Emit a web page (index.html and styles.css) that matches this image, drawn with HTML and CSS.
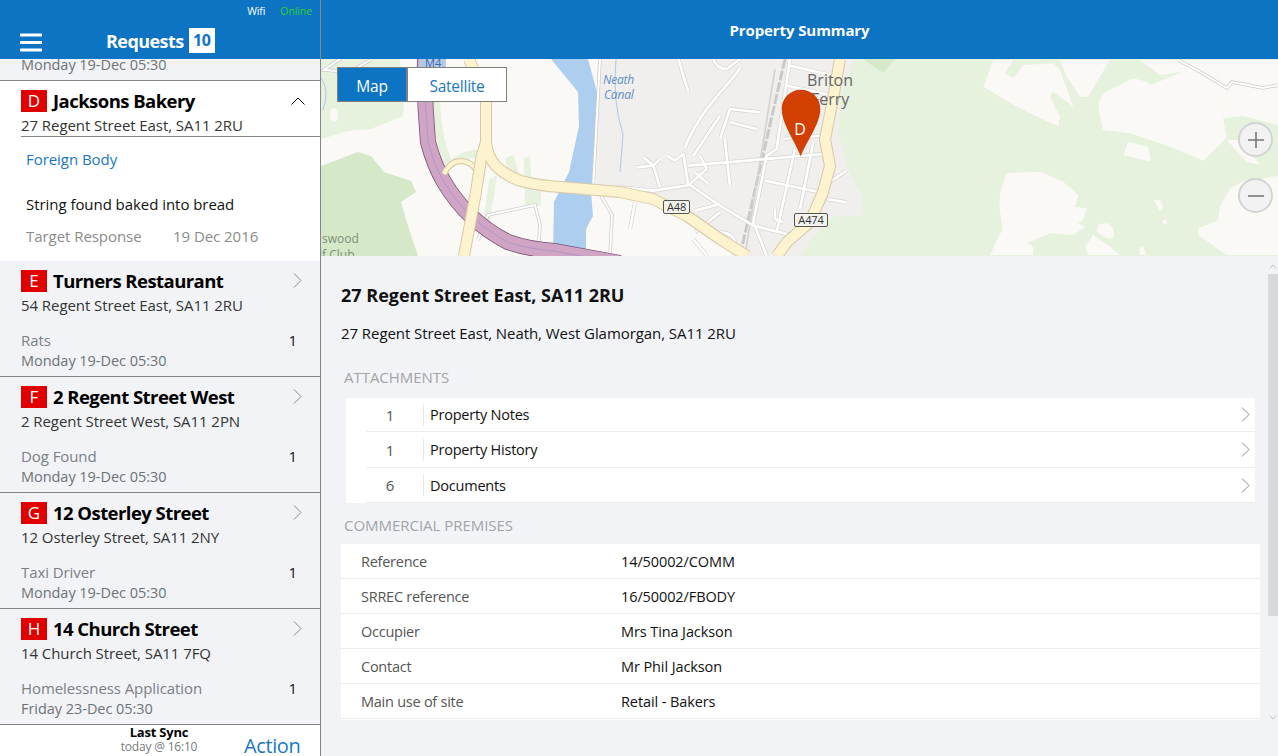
FILE: index.html
```html
<!DOCTYPE html>
<html lang="en">
<head>
<meta charset="utf-8">
<title>Property Summary</title>
<link rel="stylesheet" href="styles.css">
</head>
<body>
<div class="app">
  <aside class="sidebar">
    <header class="side-header">
      <div class="status"><span class="wifi">Wifi</span><span class="online">Online</span></div>
      <div class="side-title">
        <svg class="burger" width="22" height="19" viewBox="0 0 22 19"><path d="M1 2h20M1 9.500h20M1 17h20"/></svg>
        <span class="requests">Requests</span>
        <span class="req-count">10</span>
      </div>
    </header>
    <div class="list">
      <div class="stub"><span>Monday 19-Dec 05:30</span></div>
      <article class="item open">
        <div class="item-head"><span class="badge">D</span><span class="item-name">Jacksons Bakery</span>
          <svg class="chev-up" width="14" height="8" viewBox="0 0 14 8"><path d="M0.500 7.500L7 1l6.500 6.500"/></svg></div>
        <div class="item-addr">27 Regent Street East, SA11 2RU</div>
        <div class="item-more">
          <div class="kind">Foreign Body</div>
          <div class="note">String found baked into bread</div>
          <div class="target"><span class="target-label">Target Response</span><span>19 Dec 2016</span></div>
        </div>
      </article>
      <article class="item">
        <div class="item-head"><span class="badge">E</span><span class="item-name">Turners Restaurant</span>
          <svg class="chev" width="9" height="15" viewBox="0 0 9 15"><path d="M1 0.500l7 7-7 7"/></svg></div>
        <div class="item-addr">54 Regent Street East, SA11 2RU</div>
        <div class="item-type"><span>Rats</span><span class="num">1</span></div>
        <div class="item-date">Monday 19-Dec 05:30</div>
      </article>
      <article class="item">
        <div class="item-head"><span class="badge">F</span><span class="item-name">2 Regent Street West</span>
          <svg class="chev" width="9" height="15" viewBox="0 0 9 15"><path d="M1 0.500l7 7-7 7"/></svg></div>
        <div class="item-addr">2 Regent Street West, SA11 2PN</div>
        <div class="item-type"><span>Dog Found</span><span class="num">1</span></div>
        <div class="item-date">Monday 19-Dec 05:30</div>
      </article>
      <article class="item">
        <div class="item-head"><span class="badge">G</span><span class="item-name">12 Osterley Street</span>
          <svg class="chev" width="9" height="15" viewBox="0 0 9 15"><path d="M1 0.500l7 7-7 7"/></svg></div>
        <div class="item-addr">12 Osterley Street, SA11 2NY</div>
        <div class="item-type"><span>Taxi Driver</span><span class="num">1</span></div>
        <div class="item-date">Monday 19-Dec 05:30</div>
      </article>
      <article class="item">
        <div class="item-head"><span class="badge">H</span><span class="item-name">14 Church Street</span>
          <svg class="chev" width="9" height="15" viewBox="0 0 9 15"><path d="M1 0.500l7 7-7 7"/></svg></div>
        <div class="item-addr">14 Church Street, SA11 7FQ</div>
        <div class="item-type"><span>Homelessness Application</span><span class="num">1</span></div>
        <div class="item-date">Friday 23-Dec 05:30</div>
      </article>
    </div>
    <footer class="side-footer">
      <div class="sync"><div class="sync-title">Last Sync</div><div class="sync-time">today @ 16:10</div></div>
      <div class="action">Action</div>
    </footer>
  </aside>

  <main class="main">
    <header class="main-header">Property Summary</header>
    <section class="map">
      <svg class="map-art" width="957" height="197" viewBox="321 59 957 197">
        <rect class="m-base" x="321" y="59" width="957" height="197"/>
        <polygon class="m-pale" points="321,59 400,59 404,102 403,116 371,129 348,131 321,139"/>
        <ellipse class="m-base" cx="334" cy="115" rx="4" ry="7"/>
        <polygon class="m-dark" points="321,166 358,152 371,156 384,172 411,181 416,192 401,202 408,226 418,256 321,256"/>
        <path class="m-pale-line" d="M436 100Q438 145 450 165Q470 150 482 155"/>
        <polygon class="m-pale" points="505,158 514,155 519,176 508,176"/>
        <polygon class="m-pale" points="524,158 530,156 532,190 541,192 541,206 525,206"/>
        <polygon class="m-pale" points="489,180 497,175 490,220 484,220"/>
        <polygon class="m-urban" points="598,59 853,59 840,100 838,136 848,170 860,192 863,216 833,216 810,240 800,256 737,256 687,219 653,199 596,190"/>
        <polygon class="m-water" points="551,59 588,59 598,96 596,136 591,192 593,216 586,229 586,256 553,256 554,202 569,172 579,126 578,92"/>
        <path class="m-stream" d="M616 59Q612 100 623 135L620 172M321 78Q330 90 323 110"/>
        <!-- green hills to the east, with clearings -->
        <polygon class="m-pale" points="853,59 1278,59 1278,256 800,256 810,240 833,216 863,216 860,192 848,170 838,136 840,100"/>
        <polygon class="m-dark" points="863,59 895,59 883,73"/>
        <g transform="translate(850 50) scale(.3333)">
          <polygon class="m-base" points="430,30 400,110 500,170 570,205 625,228 630,200 600,140 610,125 670,170 630,60 610,40 520,45 490,85 465,70 490,30"/>
          <polygon class="m-base" points="630,30 650,80 690,140 715,140 780,30"/>
          <polygon class="m-base" points="870,30 930,75 1000,65 1100,70 1130,130 1120,205 1180,198 1284,225 1284,30"/>
          <polygon class="m-base" points="745,160 760,130 850,85 890,95 900,105 1000,65 1100,70 1130,130 1120,205 1130,265 1060,332 960,290 840,250 760,240 750,200"/>
          <polygon class="m-base" points="1130,270 1190,335 1230,345 1170,270"/>
          <polygon class="m-base" points="470,370 570,365 640,395 685,435 675,470 710,475 700,510 685,520 705,530 670,555 600,550 530,580 550,590 550,615 420,615 445,560 458,540 448,470 450,430"/>
          <polygon class="m-base" points="745,522 775,520 790,535 790,565 770,565 740,545"/>
          <polygon class="m-base" points="730,555 780,590 810,615 715,615 705,590"/>
          <polygon class="m-base" points="835,275 895,290 902,335 820,315"/>
          <polygon class="m-base" points="1284,378 1180,395 1140,415 1110,470 1105,510 1045,535 1045,555 1130,615 1284,615"/>
          <polygon class="m-base" points="868,590 880,590 888,615 870,615"/>
          <polygon class="m-base" points="912,450 930,450 940,470 930,485"/>
          <polygon class="m-base" points="940,510 952,510 950,522 936,520"/>
        </g>
        <path class="m-casing-thin" d="M1178 60L1197 70L1227 88L1232 82L1263 88L1278 85"/>
        <path class="m-white-thin" d="M1178 60L1197 70L1227 88L1232 82L1263 88L1278 85"/>
        <!-- white local roads west of the town -->
        <path class="m-casing-thin" d="M600 59Q596 130 593 190M599 192L612 215L610 256M478 240L488 215L535 205L540 225L538 256M340 59L324 70L350 72L370 60"/>
        <path class="m-white-thin" d="M600 59Q596 130 593 190M599 192L612 215L610 256M478 240L488 215L535 205L540 225L538 256M340 59L324 70L350 72L370 60"/>
        <!-- town streets, traced in 3x coordinates -->
        <g transform="translate(620 59) scale(.3333)">
          <path class="m-rail" d="M495 0L360 590"/>
          <path class="m-rail2" d="M465 30L375 590"/>
          <g class="m-casing">
            <path id="town" d="M175 0L205 100M360 25C350 60 250 130 195 265M300 170L220 290M330 150L420 160M330 150L300 240M330 190L410 210M315 240Q320 300 330 380M50 325L100 320L120 385M70 295L100 320L120 300M140 290L165 305L190 285L205 380M205 320L610 285M240 290L260 330L210 375M225 340L265 375M0 385L100 395L210 378L300 440L400 500L520 530M45 430L30 510M435 365L600 400M525 270L470 520M580 250L540 450M470 270L440 290L400 490L440 590M510 20L640 50M500 80L640 110M490 240L605 230M605 230L610 290M510 0L470 270M620 375L680 335M620 420L680 430M465 450L465 480L490 490M225 455L300 435M225 520L300 460M300 520Q360 520 340 590M260 590L220 540M280 0Q290 30 320 30L360 0"/>
          </g>
          <use href="#town" class="m-street"/>
        </g>
        <path class="m-road-edge" d="M425 59Q424 100 428 142Q434 165 444 182Q456 202 471 216Q488 232 508 242Q528 249 554 251L620 263"/>
        <path class="m-motor" d="M425 59Q424 100 428 142Q434 165 444 182Q456 202 471 216Q488 232 508 242Q528 249 554 251L620 263"/>
        <path class="m-motor-line" d="M425 59Q424 100 428 142Q434 165 444 182Q456 202 471 216Q488 232 508 242Q528 249 554 251L620 263"/>
        <path class="m-a-edge-thin" d="M444 174Q450 161 461 161Q475 162 478 176"/>
        <path class="m-a-thin" d="M444 174Q450 161 461 161Q475 162 478 176"/>
        <path class="m-a-edge" d="M469 59L486 99V142L481 159L476 192L464 256M486 142Q488 158 496 166Q506 176 521 181Q540 186 561 187L620 192L653 199L687 216L720 239L747 256"/>
        <path class="m-a" d="M469 59L486 99V142L481 159L476 192L464 256M486 142Q488 158 496 166Q506 176 521 181Q540 186 561 187L620 192L653 199L687 216L720 239L747 256"/>
        <path class="m-a-edge" d="M840 59L833 99L825 139L830 166L823 192L810 222L787 242L777 256"/>
        <path class="m-a" d="M840 59L833 99L825 139L830 166L823 192L810 222L787 242L777 256"/>
        <rect class="m-m4" x="419" y="59" width="27" height="8"/>
        <text class="m-m4-text" x="425" y="67">M4</text>
        <rect class="m-shield" x="663.500" y="200.500" width="26" height="13" rx="1.500"/>
        <text class="m-shield-text" x="676.500" y="211">A48</text>
        <rect class="m-shield" x="794.500" y="213.500" width="33" height="13" rx="1.500"/>
        <text class="m-shield-text" x="811" y="224">A474</text>
        <text class="m-town" x="807" y="86">Briton</text>
        <text class="m-town" x="811" y="105">Ferry</text>
        <text class="m-canal" x="603" y="84">Neath</text>
        <text class="m-canal" x="604" y="99">Canal</text>
        <text class="m-golf" x="322" y="243">swood</text>
        <text class="m-golf" x="319" y="259">lf Club</text>
        <g transform="translate(620 59) scale(.3333)">
          <path class="m-pin" d="M542 292C525 245 485 195 485 150A58 58 0 0 1 601 150C601 195 560 245 542 292Z"/>
        </g>
        <text class="m-pin-text" x="800" y="135">D</text>
      </svg>
      <div class="map-toggle"><span class="tg tg-on">Map</span><span class="tg">Satellite</span></div>
      <button class="zoom-btn zoom-in" aria-label="Zoom in"><svg width="16" height="16" viewBox="0 0 16 16"><path d="M0 8h16M8 0v16"/></svg></button>
      <button class="zoom-btn zoom-out" aria-label="Zoom out"><svg width="16" height="16" viewBox="0 0 16 16"><path d="M0 8h16"/></svg></button>
    </section>
    <section class="detail">
      <h1 class="d-title">27 Regent Street East, SA11 2RU</h1>
      <p class="d-addr">27 Regent Street East, Neath, West Glamorgan, SA11 2RU</p>
      <h2 class="d-head">ATTACHMENTS</h2>
      <div class="att-card">
        <div class="att-row"><span class="att-n">1</span><span class="att-name">Property Notes</span><svg class="att-chev" width="9" height="15" viewBox="0 0 9 15"><path d="M1 0.500l7 7-7 7"/></svg></div>
        <div class="att-row"><span class="att-n">1</span><span class="att-name">Property History</span><svg class="att-chev" width="9" height="15" viewBox="0 0 9 15"><path d="M1 0.500l7 7-7 7"/></svg></div>
        <div class="att-row"><span class="att-n">6</span><span class="att-name">Documents</span><svg class="att-chev" width="9" height="15" viewBox="0 0 9 15"><path d="M1 0.500l7 7-7 7"/></svg></div>
      </div>
      <h2 class="d-head d-head-2">COMMERCIAL PREMISES</h2>
      <div class="info-card">
        <div class="info-row"><span class="info-label">Reference</span><span>14/50002/COMM</span></div>
        <div class="info-row"><span class="info-label">SRREC reference</span><span>16/50002/FBODY</span></div>
        <div class="info-row"><span class="info-label">Occupier</span><span>Mrs Tina Jackson</span></div>
        <div class="info-row"><span class="info-label">Contact</span><span>Mr Phil Jackson</span></div>
        <div class="info-row"><span class="info-label">Main use of site</span><span>Retail - Bakers</span></div>
      </div>
      <div class="scrollbar">
        <svg class="sb-arrow" width="8" height="5" viewBox="0 0 8 5"><path d="M0.500 4.500L4 1l3.500 3.500"/></svg>
        <div class="sb-thumb"></div>
        <svg class="sb-arrow sb-down" width="8" height="5" viewBox="0 0 8 5"><path d="M0.500 0.500L4 4l3.500-3.500"/></svg>
      </div>
    </section>
  </main>
</div>
</body>
</html>
```
FILE: styles.css
```css
* { box-sizing: border-box; }
html, body { margin: 0; height: 100%; overflow: hidden; }
body { font-family: "Open Sans", "Noto Sans", sans-serif; color: #111; background: #f2f3f7; }
.app { display: flex; width: 1278px; height: 756px; overflow: hidden; }

/* sidebar */
.sidebar { width: 321px; flex: none; display: flex; flex-direction: column; border-right: 1px solid #868686; }
.side-header { height: 59px; background: #0c74c2; color: #fff; position: relative; flex: none; }
.status { display: flex; justify-content: flex-end; gap: 15px; padding: 4px 8px 0 0; font-size: 10.500px; line-height: 14px; letter-spacing: -.1px; }
.online { color: #2fd12f; }
.side-title { display: flex; align-items: center; height: 26px; margin-top: 9px; padding-left: 20px; }
.burger { stroke: #fff; stroke-width: 3; fill: none; stroke-linecap: round; flex: none; margin-top: 5px; }
.requests { font-size: 18px; font-weight: 700; margin-left: 64px; letter-spacing: -.55px; margin-top: 2px; }
.req-count { width: 26px; height: 25px; margin-left: 5px; background: #fff; color: #0c74c2; font-size: 16px; font-weight: 700; text-align: center; line-height: 25px; letter-spacing: -.5px; }

.list { flex: none; height: 666px; overflow: hidden; }
.stub { height: 22px; border-bottom: 1px solid #868686; padding: 0 0 5px 21px; display: flex; align-items: flex-end; overflow: hidden; font-size: 14.500px; line-height: 20px; color: #6d7278; letter-spacing: -.04px; }
.item { height: 116px; padding: 9px 0 0 21px; border-bottom: 1px solid #868686; background: #f2f3f7; }
.item.open { height: 180px; background: #fff; border-bottom: 0; }
.item-head { display: flex; align-items: center; height: 22px; position: relative; }
.badge { width: 26px; height: 22px; background: #e00000; color: #fff; font-size: 17px; line-height: 22px; text-align: center; flex: none; }
.item-name { font-size: 18.500px; font-weight: 700; color: #000; margin: -2px 0 0 6px; letter-spacing: -.55px; white-space: nowrap; }
.chev { position: absolute; left: 272px; top: 3px; stroke: #8a8a8a; fill: none; }
.chev-up { position: absolute; left: 270px; top: 7px; stroke: #111; fill: none; }
.item-addr { font-size: 15px; line-height: 24px; margin-top: 1px; color: #333; letter-spacing: -.07px; white-space: nowrap; }
.item-type { display: flex; justify-content: space-between; font-size: 15px; line-height: 20px; margin-top: 13px; padding-right: 23px; color: #7b8085; letter-spacing: -.08px; }
.num { color: #111; }
.item-date { font-size: 14.500px; line-height: 20px; margin-top: 1px; color: #6d7278; letter-spacing: -.04px; }
.item-more { border-top: 1px solid #868686; margin-top: -1px; padding: 12px 0 0 5px; font-size: 15px; line-height: 20px; letter-spacing: -.05px; }
.kind { color: #1878c4; }
.note { margin-top: 25px; color: #111; }
.target { margin-top: 12px; color: #8b8b8b; display: flex; }
.target-label { width: 147px; }

.side-footer { height: 31px; flex: none; background: #fff; display: flex; overflow: hidden; }
.sync { margin-left: 99px; width: 120px; text-align: center; }
.sync-title { font-size: 13px; font-weight: 700; line-height: 15px; color: #000; letter-spacing: -.2px; }
.sync-time { font-size: 12px; line-height: 14px; color: #7a7a7a; letter-spacing: -.2px; }
.action { margin-left: 25px; font-size: 20px; line-height: 42px; color: #1878c4; letter-spacing: -.4px; height: 31px; }

/* main */
.main { flex: 1; display: flex; flex-direction: column; min-width: 0; }
.main-header { height: 59px; flex: none; background: #0c74c2; color: #fff; font-size: 15px; font-weight: 700; text-align: center; line-height: 60px; letter-spacing: -.1px; }
.map { height: 197px; flex: none; position: relative; overflow: hidden; }
.map-art { display: block; }
.m-base { fill: #faf9f6; }
.m-pale { fill: #e6f1de; }
.m-dark { fill: #d5e8c8; }
.m-urban { fill: #f0efed; }
.m-water { fill: #aeceef; }
.m-pale-line { fill: none; stroke: #e6f1de; stroke-width: 8; }
.m-stream { fill: none; stroke: #a9c9ee; stroke-width: 1; }
.m-casing-thin { fill: none; stroke: #cfccc8; stroke-width: 3.500; }
.m-white-thin { fill: none; stroke: #fff; stroke-width: 2; }
.m-casing { fill: none; stroke: #d5d2ce; stroke-width: 12; stroke-linejoin: round; }
.m-street { fill: none; stroke: #fff; stroke-width: 8; stroke-linejoin: round; }
.m-rail { fill: none; stroke: #c9c9c9; stroke-width: 9; stroke-dasharray: 30 6; }
.m-rail2 { fill: none; stroke: #d2d2d2; stroke-width: 5; }
.m-road-edge { fill: none; stroke: #7a4a6a; stroke-width: 16; }
.m-motor { fill: none; stroke: #cfa4c5; stroke-width: 14.500; }
.m-motor-line { fill: none; stroke: #b199c6; stroke-width: 1; }
.m-a-edge { fill: none; stroke: #d8c8a6; stroke-width: 12; stroke-linejoin: round; }
.m-a { fill: none; stroke: #fdf3cf; stroke-width: 10; stroke-linejoin: round; }
.m-a-edge-thin { fill: none; stroke: #d8c8a6; stroke-width: 6; }
.m-a-thin { fill: none; stroke: #fdf3cf; stroke-width: 4; }
.m-m4 { fill: #b3c9e6; }
.m-m4-text { font-size: 11px; font-family: "Open Sans", sans-serif; fill: #3f6aa5; }
.m-shield { fill: #f3f2ec; stroke: #55554f; stroke-width: 1; }
.m-shield-text { font-size: 11px; font-family: "Open Sans", sans-serif; fill: #333; text-anchor: middle; letter-spacing: -.1px; }
.m-town { font-size: 16px; fill: #666; }
.m-canal { font-size: 12px; font-style: italic; fill: #5f8fc6; letter-spacing: -.2px; }
.m-golf { font-size: 12px; fill: #7f8f78; }
.m-pin { fill: #d14000; }
.m-pin-text { font-size: 16px; fill: #fff; text-anchor: middle; }

.map-toggle { position: absolute; left: 16px; top: 8px; width: 170px; height: 35px; border: 1px solid #808080; background: #fff; display: flex; }
.tg { flex: 1; text-align: center; font-size: 15.500px; line-height: 36px; color: #1878c4; letter-spacing: -.25px; }
.tg-on { flex: none; width: 70px; background: #0c74c2; color: #fff; border-right: 2px solid #808080; }
.zoom-btn { position: absolute; left: 917px; width: 35px; height: 35px; padding: 0; border-radius: 50%; border: 2px solid #d3d3d3; background: #f2f2f2; display: flex; align-items: center; justify-content: center; }
.zoom-btn svg { stroke: #777; stroke-width: 1.600; fill: none; }
.zoom-in { top: 63px; }
.zoom-out { top: 119px; }

/* detail */
.detail { flex: 1; min-height: 0; position: relative; overflow: hidden; background: #f2f3f7; padding: 27px 0 0 20px; }
.d-title { margin: 0; font-size: 18px; line-height: 24px; font-weight: 700; color: #111; }
.d-addr { margin: 16px 0 0; font-size: 15px; line-height: 20px; color: #111; letter-spacing: -.07px; }
.d-head { margin: 24px 0 11px; padding-left: 3px; font-size: 15px; line-height: 20px; font-weight: 400; color: #a3a4a8; letter-spacing: -.03px; }
.d-head-2 { margin-top: 12px; margin-bottom: 9px; }
.att-card { margin-left: 5px; width: 909px; padding-left: 20px; background: #fff; display: grid; grid-template-rows: 34px 36px 35px; }
.att-row { display: flex; align-items: center; border-bottom: 1px solid #ececec; font-size: 14.500px; letter-spacing: -.22px; padding-right: 5px; }
.att-n { width: 58px; height: 22px; line-height: 22px; padding-right: 9px; text-align: center; color: #555; border-right: 1px solid #e8e8e8; flex: none; font-size: 15px; }
.att-name { margin-left: 6px; flex: 1; color: #111; }
.att-chev { stroke: #8a8a8a; fill: none; flex: none; }
.info-card { width: 919px; height: 176px; background: #fff; }
.info-row { height: 35px; display: flex; align-items: center; border-bottom: 1px solid #ececec; font-size: 14.500px; letter-spacing: -.1px; padding-left: 20px; color: #111; }
.info-label { width: 260px; color: #555; flex: none; letter-spacing: -.25px; }
.scrollbar { position: absolute; right: 0; top: 8px; width: 10px; height: 456px; display: flex; flex-direction: column; align-items: center; }
.sb-arrow { stroke: #c4c4c4; fill: none; flex: none; }
.sb-thumb { width: 10px; height: 342px; margin-top: 5px; background: #d8d9db; }
.sb-down { margin-top: auto; }
```
